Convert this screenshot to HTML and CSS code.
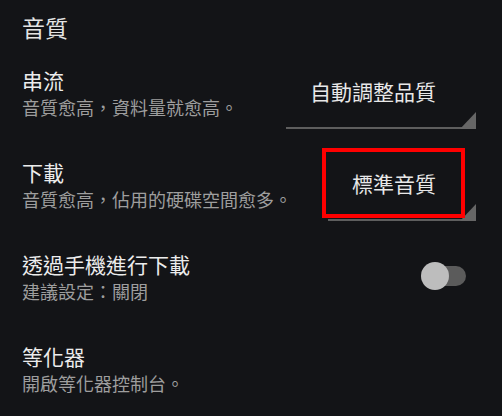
FILE: index.html
```html
<!DOCTYPE html>
<html lang="zh-Hant">
<head>
<meta charset="utf-8">
<link rel="stylesheet" href="styles.css">
</head>
<body>
<div class="screen">
  <div class="header">音質</div>

  <div class="row">
    <div class="text">
      <div class="title">串流</div>
      <div class="sub">音質愈高，資料量就愈高。</div>
    </div>
    <div class="spinner">自動調整品質<span class="tri"></span></div>
  </div>

  <div class="row">
    <div class="text">
      <div class="title">下載</div>
      <div class="sub">音質愈高，佔用的硬碟空間愈多。</div>
    </div>
    <div class="spinner">標準音質<span class="tri"></span><span class="mark"></span></div>
  </div>

  <div class="row">
    <div class="text">
      <div class="title">透過手機進行下載</div>
      <div class="sub">建議設定：關閉</div>
    </div>
    <div class="switch"><span class="track"></span><span class="thumb"></span></div>
  </div>

  <div class="row">
    <div class="text">
      <div class="title">等化器</div>
      <div class="sub">開啟等化器控制台。</div>
    </div>
  </div>
</div>
</body>
</html>
```

FILE: styles.css
```css
html, body {
  margin: 0;
  padding: 0;
  background: #131417;
}
body {
  font-family: "Noto Sans CJK TC", "Noto Sans", sans-serif;
  width: 502px;
  height: 416px;
  overflow: hidden;
}
.screen {
  padding: 0 26px 0 22px;
}
.header {
  font-size: 23px;
  line-height: 28px;
  padding-top: 13px;
  color: #e4e4e4;
}
.row {
  display: flex;
  justify-content: space-between;
  align-items: flex-start;
  padding: 26px 0 14px;
  height: 52px;
}
.title {
  font-size: 21px;
  line-height: 26px;
  color: #ececec;
}
.sub {
  margin-top: 2px;
  font-size: 18px;
  line-height: 24px;
  color: #9e9e9e;
}
.spinner {
  position: relative;
  margin-top: 11px;
  padding: 0 40px 23px 24px;
  font-size: 21px;
  line-height: 26px;
  color: #e8e8e8;
  border-bottom: 2px solid #5e5e5e;
  white-space: nowrap;
}
.tri {
  position: absolute;
  right: 0;
  bottom: -2px;
  width: 16px;
  height: 17px;
  background: #666666;
  clip-path: polygon(100% 0, 100% 100%, 0 100%);
}
.mark {
  position: absolute;
  left: -6px;
  top: -22px;
  width: 143px;
  height: 70px;
  box-sizing: border-box;
  border: 4px solid #ff0000;
}
.switch {
  position: relative;
  margin-top: 11px;
  margin-right: 10px;
  width: 45px;
  height: 28px;
}
.track {
  position: absolute;
  right: 0;
  top: 4px;
  width: 44px;
  height: 20px;
  border-radius: 10px;
  background: #5b5b5b;
}
.thumb {
  position: absolute;
  left: 0;
  top: 0;
  width: 28px;
  height: 28px;
  border-radius: 50%;
  background: #bdbdbd;
}
```
